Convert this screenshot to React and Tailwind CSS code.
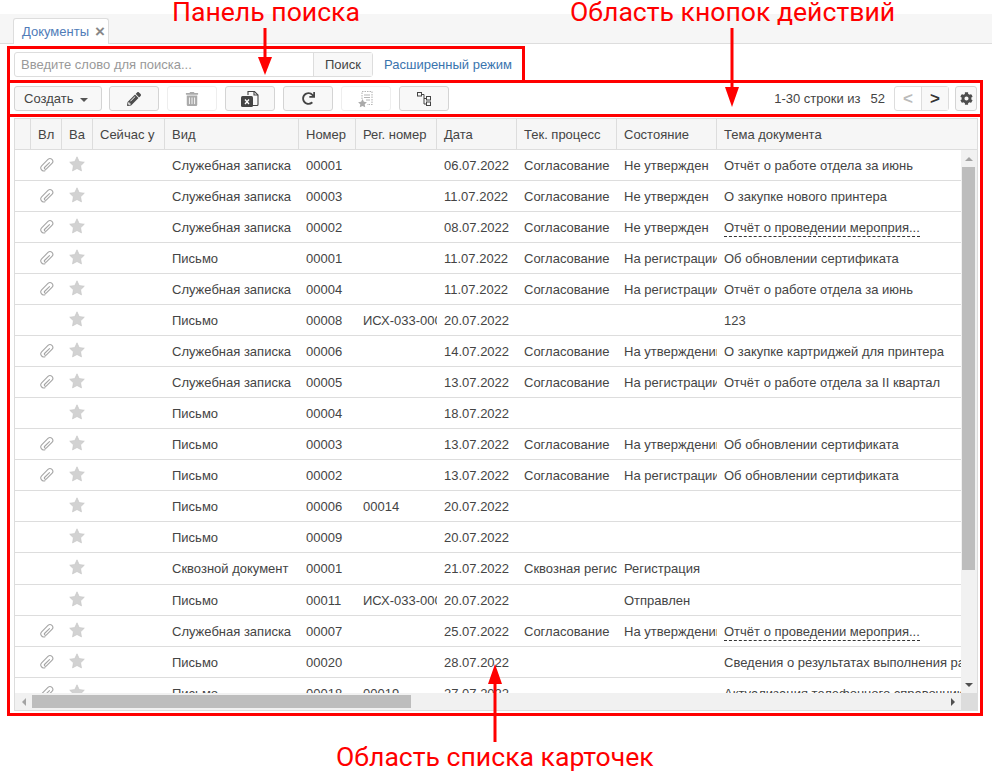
import React from 'react';
import { FaCog, FaPencilAlt, FaRedo, FaTrashAlt } from 'react-icons/fa';

const columns = [
  { title: '', w: 'w-[16px]' },
  { title: 'Вл', w: 'w-[31px]' },
  { title: 'Ва', w: 'w-[31px]' },
  { title: 'Сейчас у', w: 'w-[72px]' },
  { title: 'Вид', w: 'w-[134px]' },
  { title: 'Номер', w: 'w-[57px]' },
  { title: 'Рег. номер', w: 'w-[81px]' },
  { title: 'Дата', w: 'w-[80px]' },
  { title: 'Тек. процесс', w: 'w-[100px]' },
  { title: 'Состояние', w: 'w-[100px]' },
  { title: 'Тема документа', w: 'w-[262px]' },
];

const SZ = 'Служебная записка';
const PI = 'Письмо';
const AG = 'Согласование';
const NU = 'Не утвержден';
const NR = 'На регистрации';
const NY = 'На утверждении';
const EVENT = 'Отчёт о проведении мероприя...';

const rows = [
  { clip: true, kind: SZ, num: '00001', date: '06.07.2022', proc: AG, state: NU, topic: 'Отчёт о работе отдела за июнь' },
  { clip: true, kind: SZ, num: '00003', date: '11.07.2022', proc: AG, state: NU, topic: 'О закупке нового принтера' },
  { clip: true, kind: SZ, num: '00002', date: '08.07.2022', proc: AG, state: NU, topic: EVENT, dashed: true },
  { clip: true, kind: PI, num: '00001', date: '11.07.2022', proc: AG, state: NR, topic: 'Об обновлении сертификата' },
  { clip: true, kind: SZ, num: '00004', date: '11.07.2022', proc: AG, state: NR, topic: 'Отчёт о работе отдела за июнь' },
  { kind: PI, num: '00008', reg: 'ИСХ-033-00014', date: '20.07.2022', topic: '123' },
  { clip: true, kind: SZ, num: '00006', date: '14.07.2022', proc: AG, state: NY, topic: 'О закупке картриджей для принтера' },
  { clip: true, kind: SZ, num: '00005', date: '13.07.2022', proc: AG, state: NR, topic: 'Отчёт о работе отдела за II квартал' },
  { kind: PI, num: '00004', date: '18.07.2022' },
  { clip: true, kind: PI, num: '00003', date: '13.07.2022', proc: AG, state: NY, topic: 'Об обновлении сертификата' },
  { clip: true, kind: PI, num: '00002', date: '13.07.2022', proc: AG, state: NR, topic: 'Об обновлении сертификата' },
  { kind: PI, num: '00006', reg: '00014', date: '20.07.2022' },
  { kind: PI, num: '00009', date: '20.07.2022' },
  { tall: true, kind: 'Сквозной документ', num: '00001', date: '21.07.2022', proc: 'Сквозная регистрация', state: 'Регистрация' },
  { kind: PI, num: '00011', reg: 'ИСХ-033-00015', date: '20.07.2022', state: 'Отправлен' },
  { clip: true, kind: SZ, num: '00007', date: '25.07.2022', proc: AG, state: NY, topic: EVENT, dashed: true },
  { clip: true, kind: PI, num: '00020', date: '28.07.2022', topic: 'Сведения о результатах выполнения работ' },
  { clip: true, kind: PI, num: '00018', reg: '00019', date: '27.07.2022', topic: 'Актуализация телефонного справочника' },
];

const StarIcon = () => (
  <svg viewBox="0 0 16 16" className="w-[16px] h-[16px]">
    <path d="M8 .8l2.2 4.7 5.1.7-3.7 3.6.9 5.1L8 12.5l-4.5 2.4.9-5.1L.7 6.2l5.1-.7z" fill="#d2d2d2" stroke="#c4c4c4" strokeWidth="0.6" />
  </svg>
);

const ClipIcon = () => (
  <svg viewBox="0 0 16 16" className="w-[16px] h-[16px]" fill="none" stroke="#a6a6a6" strokeWidth="1.1" strokeLinecap="round">
    <g transform="rotate(45 8 8)">
      <path d="M8 4.5V11.2a1.2 1.2 0 0 0 2.4 0V3.4a2.8 2.8 0 0 0-5.6 0V12.4a3 3 0 0 0 5.8 1" />
    </g>
  </svg>
);

const Cell = ({ w, children }) => (
  <div className={`${w} shrink-0 overflow-hidden whitespace-nowrap pl-[7px] pr-[1px]`}>{children}</div>
);

const ToolButton = ({ disabled, children }) => (
  <button className={`w-[50px] h-[25px] flex items-center justify-center rounded-[3px] border ${disabled ? 'border-[#eeeeee] bg-white' : 'border-[#d4d4d4] bg-[#f8f8f8]'}`}>
    {children}
  </button>
);

const Row = ({ row }) => (
  <div className={`flex ${row.tall ? 'h-[32px] pb-[1px]' : 'h-[31px]'} shrink-0 items-center border-b border-[#dddddd] pt-[2px] text-[13px] text-[#444444]`}>
    <div className="w-[16px] shrink-0" />
    <div className="w-[31px] shrink-0 flex justify-center -mt-[2px]">
      {row.clip && <ClipIcon />}
    </div>
    <div className="w-[31px] shrink-0 flex justify-center -mt-[5px] pr-[1px]"><StarIcon /></div>
    <div className="w-[72px] shrink-0" />
    <Cell w="w-[134px]">{row.kind}</Cell>
    <Cell w="w-[57px]">{row.num}</Cell>
    <Cell w="w-[81px]">{row.reg}</Cell>
    <Cell w="w-[80px]">{row.date}</Cell>
    <Cell w="w-[100px]">{row.proc}</Cell>
    <Cell w="w-[100px]">{row.state}</Cell>
    <Cell w="w-[262px]">
      {row.dashed ? <span className="border-b border-dashed border-[#333333] pb-[1px]">{row.topic}</span> : row.topic}
    </Cell>
  </div>
);

export default function App() {
  return (
    <div className="relative w-[992px] h-[772px] overflow-hidden bg-white font-['Liberation_Sans',Arial,sans-serif] text-[13px] text-[#444444]">
      <div className="h-[14px]" />

      {/* вкладки */}
      <div className="h-[30px] bg-[#f6f6f6] border-b border-[#dddddd] pl-[13px] pt-[4px]">
        <div className="w-[96px] h-[26px] flex items-center gap-[6px] pl-[8px] bg-white border border-b-0 border-[#dddddd] rounded-t-[3px] text-[#4f7cb8]">
          <span>Документы</span>
          <span className="text-[#888888] text-[17px] font-bold leading-none">×</span>
        </div>
      </div>

      <div className="h-[2px]" />

      {/* панель поиска */}
      <div className="w-[518px] h-[37px] ml-[7px] border-[3px] border-[#ff0000] pl-[4px] flex items-center">
        <div className="flex h-[25px] w-[359px] border border-[#dddddd] rounded-[3px]">
          <div className="w-[299px] pl-[6px] flex items-center text-[#999999] border-r border-[#dddddd]">Введите слово для поиска...</div>
          <div className="flex-1 flex items-center justify-center bg-[#f8f8f8]">Поиск</div>
        </div>
        <a className="ml-[11px] text-[#3a74ae]">Расширенный режим</a>
      </div>

      {/* кнопки действий */}
      <div className="w-[976px] h-[37px] -mt-[3px] ml-[7px] border-[3px] border-[#ff0000] pl-[4px] pr-[3px] flex items-center">
        <button className="w-[88px] h-[25px] mr-[7px] flex items-center gap-[7px] pl-[9px] rounded-[3px] border border-[#d4d4d4] bg-[#f8f8f8]">
          Создать
          <span className="w-0 h-0 border-x-[4px] border-x-transparent border-t-[4px] border-t-[#555555] mt-[2px]" />
        </button>
        <div className="flex gap-[8px]">
          <ToolButton><FaPencilAlt size={14} className="text-[#4d4d4d]" /></ToolButton>
          <ToolButton disabled><FaTrashAlt size={14} className="text-[#aaaaaa]" /></ToolButton>
          <ToolButton>
            <svg viewBox="0 0 20 18" className="w-[20px] h-[18px]">
              <path d="M8 5V1.5h6.5L18 5v9.5c0 .6-.4 1-1 1h-4" fill="none" stroke="#444444" strokeWidth="1.1" />
              <path d="M14 1.5V5h4" fill="none" stroke="#444444" strokeWidth="1.1" />
              <rect x="1" y="6" width="12" height="11" rx="1.5" fill="#444444" />
              <path d="M5 9.5l4 4.5M9 9.5l-4 4.5" stroke="#ffffff" strokeWidth="1.3" />
            </svg>
          </ToolButton>
          <ToolButton><FaRedo size={13} className="text-[#444444]" /></ToolButton>
          <ToolButton disabled>
            <svg viewBox="0 0 18 18" className="w-[18px] h-[18px]">
              <path d="M5 9V1.5h10v13h-5" fill="none" stroke="#b5b5b5" strokeWidth="1.1" strokeDasharray="1.5 1" />
              <path d="M7 5h6M7 7.5h6M9 10h4" stroke="#b5b5b5" strokeWidth="1.1" />
              <path d="M5.5 9l1.4 2.8 3 .4-2.2 2.1.5 3-2.7-1.4-2.7 1.4.5-3L1.1 12.2l3-.4z" fill="#aaaaaa" />
            </svg>
          </ToolButton>
          <ToolButton>
            <svg viewBox="0 0 16 16" className="w-[16px] h-[16px]" fill="none" stroke="#444444" strokeWidth="1">
              <rect x="1.5" y="1.5" width="4" height="3.5" />
              <rect x="10.5" y="5.5" width="4" height="3.5" />
              <rect x="10.5" y="11" width="4" height="3.5" />
              <path d="M5.5 3.5H8v9.5h2.5M8 7.5h2.5" />
            </svg>
          </ToolButton>
        </div>
        <div className="flex-1" />
        <span>1-30 строки из</span>
        <span className="ml-[10px] mr-[9px]">52</span>
        <div className="flex h-[25px] w-[55px] border border-[#dddddd] rounded-[3px] font-bold text-[17px]">
          <div className="w-[27px] flex items-center justify-center text-[#bbbbbb] border-r border-[#dddddd]">&lt;</div>
          <div className="flex-1 flex items-center justify-center bg-[#f8f8f8] text-[#333333]">&gt;</div>
        </div>
        <button className="ml-[6px] w-[22px] h-[25px] flex items-center justify-center rounded-[3px] border border-[#d4d4d4] bg-[#f8f8f8]">
          <FaCog size={13} className="text-[#4d4d4d]" />
        </button>
      </div>

      {/* список карточек */}
      <div className="w-[976px] h-[602px] -mt-[3px] ml-[7px] border-[3px] border-[#ff0000] px-[4px] pt-[1px] pb-[2px]">
        <div className="h-full w-[964px] flex flex-col border border-[#dddddd]">
          <div className="flex h-[31px] shrink-0 bg-[#f6f6f6] border-b border-[#dddddd]">
            {columns.map((col, i) => (
              <div key={i} className={`${col.w} shrink-0 flex items-center whitespace-nowrap px-[7px] pt-[2px] ${i < columns.length - 1 ? 'border-r border-[#dddddd]' : ''}`}>
                {col.title}
              </div>
            ))}
          </div>
          <div className="flex flex-1 min-h-0">
            <div className="flex-1 min-w-0 overflow-hidden">
              {rows.map((row, i) => <Row key={i} row={row} />)}
            </div>
            <div className="w-[16px] shrink-0 bg-[#f1f1f1] flex flex-col">
              <div className="h-[17px] shrink-0 flex items-center justify-center">
                <span className="w-0 h-0 border-x-[4px] border-x-transparent border-b-[4px] border-b-[#a3a3a3]" />
              </div>
              <div className="w-[13px] h-[403px] ml-[1px] bg-[#bdbdbd]" />
              <div className="flex-1" />
              <div className="h-[17px] shrink-0 flex items-center justify-center">
                <span className="w-0 h-0 border-x-[4px] border-x-transparent border-t-[4px] border-t-[#505050]" />
              </div>
            </div>
          </div>
          <div className="flex h-[17px] shrink-0 items-center bg-[#f1f1f1]">
            <div className="w-[17px] flex justify-center">
              <span className="w-0 h-0 border-y-[4px] border-y-transparent border-r-[4px] border-r-[#a3a3a3]" />
            </div>
            <div className="w-[379px] h-[13px] bg-[#bdbdbd]" />
            <div className="flex-1" />
            <div className="w-[17px] flex justify-center">
              <span className="w-0 h-0 border-y-[4px] border-y-transparent border-l-[4px] border-l-[#505050]" />
            </div>
            <div className="w-[16px] h-full bg-[#dcdcdc]" />
          </div>
        </div>
      </div>

      {/* подписи поверх скриншота */}
      <span className="absolute left-[172px] top-[-4px] font-['Roboto',sans-serif] text-[26.6px] leading-[32px] text-[#ff0000] whitespace-nowrap">Панель поиска</span>
      <span className="absolute left-[570px] top-[-4px] font-['Roboto',sans-serif] text-[26.6px] leading-[32px] text-[#ff0000] whitespace-nowrap">Область кнопок действий</span>
      <span className="absolute left-[336px] top-[741px] font-['Roboto',sans-serif] text-[26.6px] leading-[32px] text-[#ff0000] whitespace-nowrap">Область списка карточек</span>
      <svg className="absolute inset-0 w-[992px] h-[772px] pointer-events-none" viewBox="0 0 992 772">
        <path d="M265 28v32" stroke="#ff0000" strokeWidth="3" />
        <path d="M258 57h14l-7 18z" fill="#ff0000" />
        <path d="M732 28v62" stroke="#ff0000" strokeWidth="3" />
        <path d="M725 87h14l-7 20z" fill="#ff0000" />
        <path d="M495 742v-62" stroke="#ff0000" strokeWidth="3" />
        <path d="M488 684h14l-7-20z" fill="#ff0000" />
      </svg>
    </div>
  );
}
